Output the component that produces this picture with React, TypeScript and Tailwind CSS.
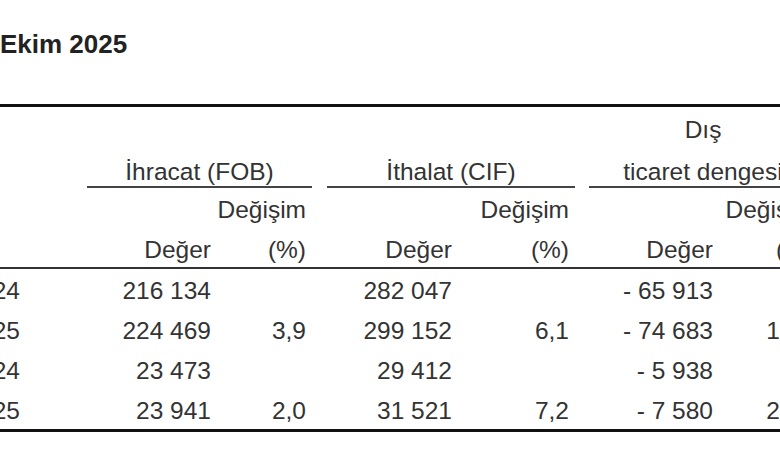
import React from "react";

const rows = [
  { label: "Ocak-Ekim 2024", v: ["216 134", "", "282 047", "", "- 65 913", ""] },
  { label: "Ocak-Ekim 2025", v: ["224 469", "3,9", "299 152", "6,1", "- 74 683", "13,3"] },
  { label: "Ekim 2024", v: ["23 473", "", "29 412", "", "- 5 938", ""] },
  { label: "Ekim 2025", v: ["23 941", "2,0", "31 521", "7,2", "- 7 580", "27,7"] },
];

const pads = ["pr-[3px]", "pr-[14px]", "pr-[3px]", "pr-[13px]", "pr-[3px]", "pr-[16px]"];

function Cell({ children, pad }: { children?: React.ReactNode; pad: string }) {
  return <div className={`flex justify-end whitespace-nowrap ${pad}`}>{children}</div>;
}

export default function App() {
  const grid = "grid grid-cols-[280px_134px_106px_135px_127px_134px_114px]";
  return (
    <div className="relative w-[780px] h-[470px] overflow-hidden bg-white text-[#333] font-['Liberation_Sans',Arial,sans-serif]">
      <div className="pt-[29px] text-[26px] leading-[30px] font-bold text-[#222] whitespace-nowrap">Ekim 2025</div>
      <div className="ml-[-200px] w-[1030px] mt-[45px] border-t-[3px] border-[#111] text-[24.5px]">
        {/* group header */}
        <div className="grid grid-cols-[280px_240px_262px_248px] h-[81px]">
          <div />
          <div className="ml-[7px] mr-[8px] flex flex-col justify-end items-center border-b-2 border-[#444] leading-[28px] whitespace-nowrap">
            <div>İhracat (FOB)</div>
          </div>
          <div className="mx-[7px] flex flex-col justify-end items-center border-b-2 border-[#444] leading-[28px] whitespace-nowrap">
            <div>İthalat (CIF)</div>
          </div>
          <div className="ml-[7px] mr-[13px] flex flex-col justify-end items-center border-b-2 border-[#444] leading-[28px] whitespace-nowrap">
            <div>Dış</div>
            <div className="mt-[14px]">ticaret dengesi</div>
          </div>
        </div>
        {/* Değişim row */}
        <div className={`${grid} h-[42px] pt-[8px] leading-[28px]`}>
          <div />
          <Cell pad={pads[0]} />
          <Cell pad={pads[1]}>Değişim</Cell>
          <Cell pad={pads[2]} />
          <Cell pad={pads[3]}>Değişim</Cell>
          <Cell pad={pads[4]} />
          <Cell pad={pads[5]}>Değişim</Cell>
        </div>
        {/* Değer row */}
        <div className={`${grid} h-[39px] pt-[6px] leading-[28px] border-b-2 border-[#333]`}>
          <div />
          <Cell pad={pads[0]}>Değer</Cell>
          <Cell pad={pads[1]}>(%)</Cell>
          <Cell pad={pads[2]}>Değer</Cell>
          <Cell pad={pads[3]}>(%)</Cell>
          <Cell pad={pads[4]}>Değer</Cell>
          <Cell pad={pads[5]}>(%)</Cell>
        </div>
        {/* data */}
        <div className="pt-[2px] border-b-[3px] border-[#111]">
          {rows.map((r, i) => (
            <div key={i} className={`${grid} ${i === rows.length - 1 ? "h-[38px]" : "h-[40px]"} leading-[40px]`}>
              <div className="flex justify-end pr-[60px] whitespace-nowrap">{r.label}</div>
              {r.v.map((v, j) => (
                <Cell key={j} pad={pads[j]}>{v}</Cell>
              ))}
            </div>
          ))}
        </div>
      </div>
    </div>
  );
}
